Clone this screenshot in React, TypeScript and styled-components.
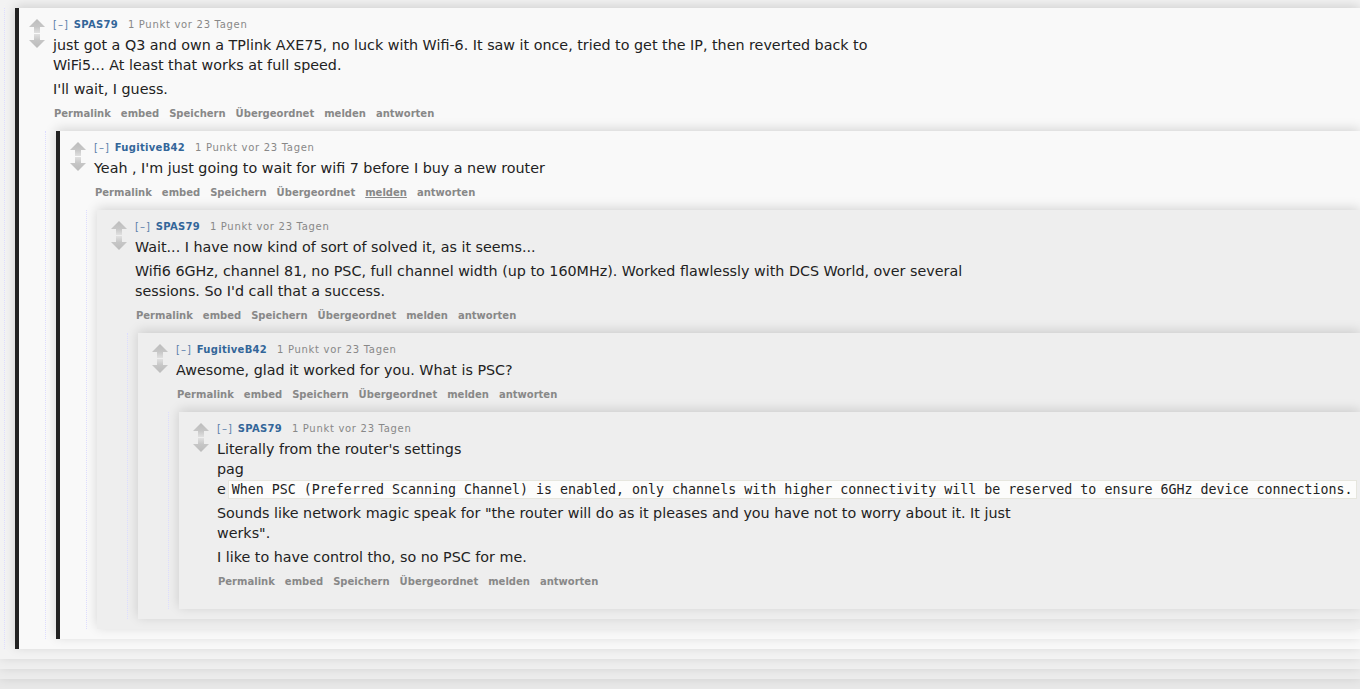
import React from 'react';
import styled, { createGlobalStyle, css } from 'styled-components';

const GlobalStyle = createGlobalStyle`
	html, body {
		margin: 0;
		padding: 0;
	}
	body {
		background: #e6e6e6;
		font-family: "DejaVu Sans", Verdana, sans-serif;
		overflow: hidden;
	}
`;

const shadow = '0 -2px 11px rgba(0, 0, 0, 0.15)';

const Styled = {
	Page: styled.div`
		width: 1360px;
		height: 689px;
		overflow: hidden;
	`,
	Shell: styled.div<{ $top?: number; $bg: string }>`
		background: ${props => props.$bg};
		box-shadow: ${shadow};
		padding: ${props => props.$top || 0}px 0 10px 0;
	`,
	Children: styled.div<{ $offset: number }>`
		margin-left: ${props => props.$offset}px;
		border-left: 1px dotted #ddddff;
		padding-left: 10px;
	`,
	Comment: styled.div<{ $tone: 'light' | 'grey'; $bar?: boolean }>`
		background: ${props => (props.$tone === 'light' ? '#f9f9f9' : '#eeeeee')};
		box-shadow: ${props => (props.$bar ? `inset 4px 0 0 #222222, ${shadow}` : shadow)};
		padding: 10px 0 10px 0;
	`,
	Entry: styled.div`
		display: flex;
		margin-bottom: 9px;
	`,
	Votes: styled.div`
		display: flex;
		flex-direction: column;
		gap: 1px;
		width: 16px;
		margin: 1px 8px 0 14px;
		flex-shrink: 0;
	`,
	Content: styled.div`
		flex: 1;
		min-width: 0;
	`,
	Tagline: styled.div`
		font-size: 10px;
		line-height: 14px;
		color: #888888;
		white-space: nowrap;
		letter-spacing: 0.7px;
	`,
	Expand: styled.span`
		color: #5b7fab;
		letter-spacing: 1px;
	`,
	Author: styled.span`
		color: #336699;
		font-weight: bold;
		letter-spacing: 0.3px;
		margin-left: 1px;
	`,
	Time: styled.span`
		margin-left: 6px;
	`,
	Body: styled.div`
		margin-top: 3px;
		max-width: 840px;
		font-size: 14.3px;
		line-height: 20px;
		color: #222222;

		p {
			margin: 0 0 4px 0;
		}
	`,
	Code: styled.code`
		font-family: "DejaVu Sans Mono", "Liberation Mono", monospace;
		font-size: 13.3px;
		line-height: 16px;
		background: #fcfcfb;
		border: 1px solid #e6e6de;
		padding: 1px 3px;
		margin-left: 2px;
		white-space: nowrap;
		color: #222222;
	`,
	Buttons: styled.ul`
		display: flex;
		list-style: none;
		margin: 0;
		padding: 3px 0 0 0;
		font-size: 10px;
		line-height: 16px;
		font-weight: bold;
	`,
	Button: styled.li`
		padding-right: 8px;
	`,
	ButtonLink: styled.a<{ $hover?: boolean }>`
		color: #888888;
		padding: 0 1px;
		text-decoration: none;
		${props =>
			props.$hover &&
			css`
				text-decoration: underline;
			`}
	`,
};

const Arrow = ({ down }: { down?: boolean }) => (
	<svg width="16" height="14" viewBox="0 0 16 14" style={{ display: 'block' }}>
		<defs>
			<linearGradient id={down ? 'ad' : 'au'} x1="0" y1={down ? '1' : '0'} x2="0" y2={down ? '0' : '1'}>
				<stop offset="0" stopColor="#bcbcbc" />
				<stop offset="0.55" stopColor="#c6c6c6" />
				<stop offset="1" stopColor="#e0e0e0" />
			</linearGradient>
		</defs>
		<path
			d={down ? 'M8 14 L16 6 L11 6 L11 0 L5 0 L5 6 L0 6 Z' : 'M8 0 L16 8 L11 8 L11 14 L5 14 L5 8 L0 8 Z'}
			fill={`url(#${down ? 'ad' : 'au'})`}
		/>
	</svg>
);

type CommentData = {
	author: string;
	tone: 'light' | 'grey';
	bar?: boolean;
	hovered?: string;
	body: React.ReactNode;
	reply?: CommentData;
};

const buttons = ['Permalink', 'embed', 'Speichern', 'Übergeordnet', 'melden', 'antworten'];

const thread: CommentData = {
	author: 'SPAS79',
	tone: 'light',
	bar: true,
	body: (
		<>
			<p>
				just got a Q3 and own a TPlink AXE75, no luck with Wifi-6. It saw it once, tried to get the IP, then
				reverted back to WiFi5... At least that works at full speed.
			</p>
			<p>I'll wait, I guess.</p>
		</>
	),
	reply: {
		author: 'FugitiveB42',
		tone: 'light',
		bar: true,
		hovered: 'melden',
		body: <p>Yeah , I'm just going to wait for wifi 7 before I buy a new router</p>,
		reply: {
			author: 'SPAS79',
			tone: 'grey',
			body: (
				<>
					<p>Wait... I have now kind of sort of solved it, as it seems...</p>
					<p>
						Wifi6 6GHz, channel 81, no PSC, full channel width (up to 160MHz). Worked flawlessly with DCS
						World, over several sessions. So I'd call that a success.
					</p>
				</>
			),
			reply: {
				author: 'FugitiveB42',
				tone: 'grey',
				body: <p>Awesome, glad it worked for you. What is PSC?</p>,
				reply: {
					author: 'SPAS79',
					tone: 'grey',
					body: (
						<>
							<p>
								Literally from the router's settings
								<br />
								pag
								<br />e
								<Styled.Code>
									When PSC (Preferred Scanning Channel) is enabled, only channels with higher
									connectivity will be reserved to ensure 6GHz device connections.
								</Styled.Code>
							</p>
							<p>
								Sounds like network magic speak for "the router will do as it pleases and you have not
								to worry about it. It just werks".
							</p>
							<p>I like to have control tho, so no PSC for me.</p>
						</>
					),
				},
			},
		},
	},
};

const Comment = ({ data }: { data: CommentData }) => (
	<Styled.Comment $tone={data.tone} $bar={data.bar}>
		<Styled.Entry>
			<Styled.Votes>
				<Arrow />
				<Arrow down />
			</Styled.Votes>
			<Styled.Content>
				<Styled.Tagline>
					<Styled.Expand>[–]</Styled.Expand> <Styled.Author>{data.author}</Styled.Author>{' '}
					<Styled.Time>1 Punkt vor 23 Tagen</Styled.Time>
				</Styled.Tagline>
				<Styled.Body>{data.body}</Styled.Body>
				<Styled.Buttons>
					{buttons.map(label => (
						<Styled.Button key={label}>
							<Styled.ButtonLink href="#" $hover={data.hovered === label}>
								{label}
							</Styled.ButtonLink>
						</Styled.Button>
					))}
				</Styled.Buttons>
			</Styled.Content>
		</Styled.Entry>
		{data.reply && (
			<Styled.Children $offset={30}>
				<Comment data={data.reply} />
			</Styled.Children>
		)}
	</Styled.Comment>
);

const App = () => {
	return (
		<Styled.Page>
			<GlobalStyle />
			<Styled.Shell $bg="#e8e8e8">
				<Styled.Shell $bg="#ececec">
					<Styled.Shell $bg="#efefef">
						<Styled.Shell $bg="#f3f3f3" $top={8}>
							<Styled.Children $offset={4}>
								<Comment data={thread} />
							</Styled.Children>
						</Styled.Shell>
					</Styled.Shell>
				</Styled.Shell>
			</Styled.Shell>
		</Styled.Page>
	);
};

export default App;
